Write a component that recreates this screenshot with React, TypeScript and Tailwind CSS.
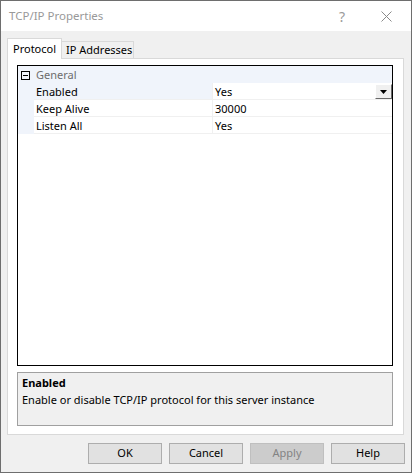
import React from "react";

const font = { fontFamily: '"Noto Sans", "Open Sans", sans-serif' };

const rows = [
  { name: "Enabled", value: "Yes", selected: true },
  { name: "Keep Alive", value: "30000" },
  { name: "Listen All", value: "Yes" },
];

function Btn({ label, disabled }: { label: string; disabled?: boolean }) {
  return (
    <div
      className={
        "w-[74px] h-[21px] flex items-center justify-center text-[11px] border " +
        (disabled
          ? "bg-[#cccccc] border-[#bfbfbf] text-[#838383]"
          : "bg-[#e1e1e1] border-[#adadad] text-black")
      }
    >
      {label}
    </div>
  );
}

export default function App() {
  return (
    <div
      className="w-[412px] h-[473px] border border-[#6e6e6e] bg-[#f0f0f0] flex flex-col text-black"
      style={font}
    >
      {/* Title bar */}
      <div className="h-[30px] bg-white flex items-center pl-[8px] shrink-0">
        <span className="text-[11.5px] text-[#999999] flex-1">TCP/IP Properties</span>
        <span className="text-[14px] text-[#9a9a9a] mr-[36px]">?</span>
        <svg width="11" height="11" viewBox="0 0 11 11" className="mr-[19px]">
          <path d="M0.5 0.5 L10.5 10.5 M10.5 0.5 L0.5 10.5" stroke="#8a8a8a" strokeWidth="1" />
        </svg>
      </div>

      {/* Tabs */}
      <div className="flex items-end h-[27px] pl-[6px] shrink-0">
        <div className="w-[55px] h-[21px] bg-white border border-b-0 border-[#d9d9d9] text-[11px] pl-[5px] leading-[19px] whitespace-nowrap relative top-[1px] z-10">
          Protocol
        </div>
        <div className="w-[72px] h-[17px] border border-b-0 border-l-0 border-[#d9d9d9] text-[11px] pl-[4px] leading-[16px] whitespace-nowrap">
          IP Addresses
        </div>
      </div>

      {/* Panel */}
      <div className="ml-[6px] w-[397px] h-[377px] bg-white border border-[#d9d9d9] pt-[6px] pl-[9px] flex flex-col">
        {/* Property grid */}
        <div className="w-[376px] h-[301px] border border-black bg-white flex flex-col text-[11px]">
          <div className="h-[17px] bg-[#f0f4fb] flex items-center pt-[2px]">
            <div className="w-[16px] pl-[3px]">
              <div className="w-[9px] h-[9px] border border-black flex items-center justify-center">
                <div className="w-[5px] h-[1px] bg-black" />
              </div>
            </div>
            <span className="pl-[2px] text-[#6d6d6d]">General</span>
          </div>
          {rows.map((r) => (
            <div key={r.name} className="h-[17px] flex">
              <div className="w-[16px] bg-[#f0f4fb]" />
              <div
                className={
                  "w-[178px] flex items-center pl-[2px] pt-[2px] border-b border-[#f0f0f0] " +
                  (r.selected ? "bg-[#f0f4fb]" : "bg-white")
                }
              >
                {r.name}
              </div>
              <div className="flex-1 flex items-center pl-[2px] pt-[2px] border-b border-l border-[#f0f0f0] relative">
                {r.value}
                {r.selected && (
                  <div className="absolute right-[0px] top-[1px] w-[17px] h-[15px] bg-[#f0f0f0] border border-t-white border-l-white border-r-[#696969] border-b-[#696969] flex items-center justify-center">
                    <svg width="7" height="4" viewBox="0 0 7 4">
                      <path d="M0 0 H7 L3.5 4 Z" fill="#000" />
                    </svg>
                  </div>
                )}
              </div>
            </div>
          ))}
        </div>

        {/* Description */}
        <div className="mt-[6px] w-[376px] h-[54px] bg-[#f0f0f0] border border-[#a0a0a0] pl-[4px] pt-[1px] text-[11px] leading-[17px]">
          <div className="font-bold">Enabled</div>
          <div>Enable or disable TCP/IP protocol for this server instance</div>
        </div>
      </div>

      {/* Buttons */}
      <div className="flex gap-[7px] pl-[87px] mt-[8px]">
        <Btn label="OK" />
        <Btn label="Cancel" />
        <Btn label="Apply" disabled />
        <Btn label="Help" />
      </div>
    </div>
  );
}
